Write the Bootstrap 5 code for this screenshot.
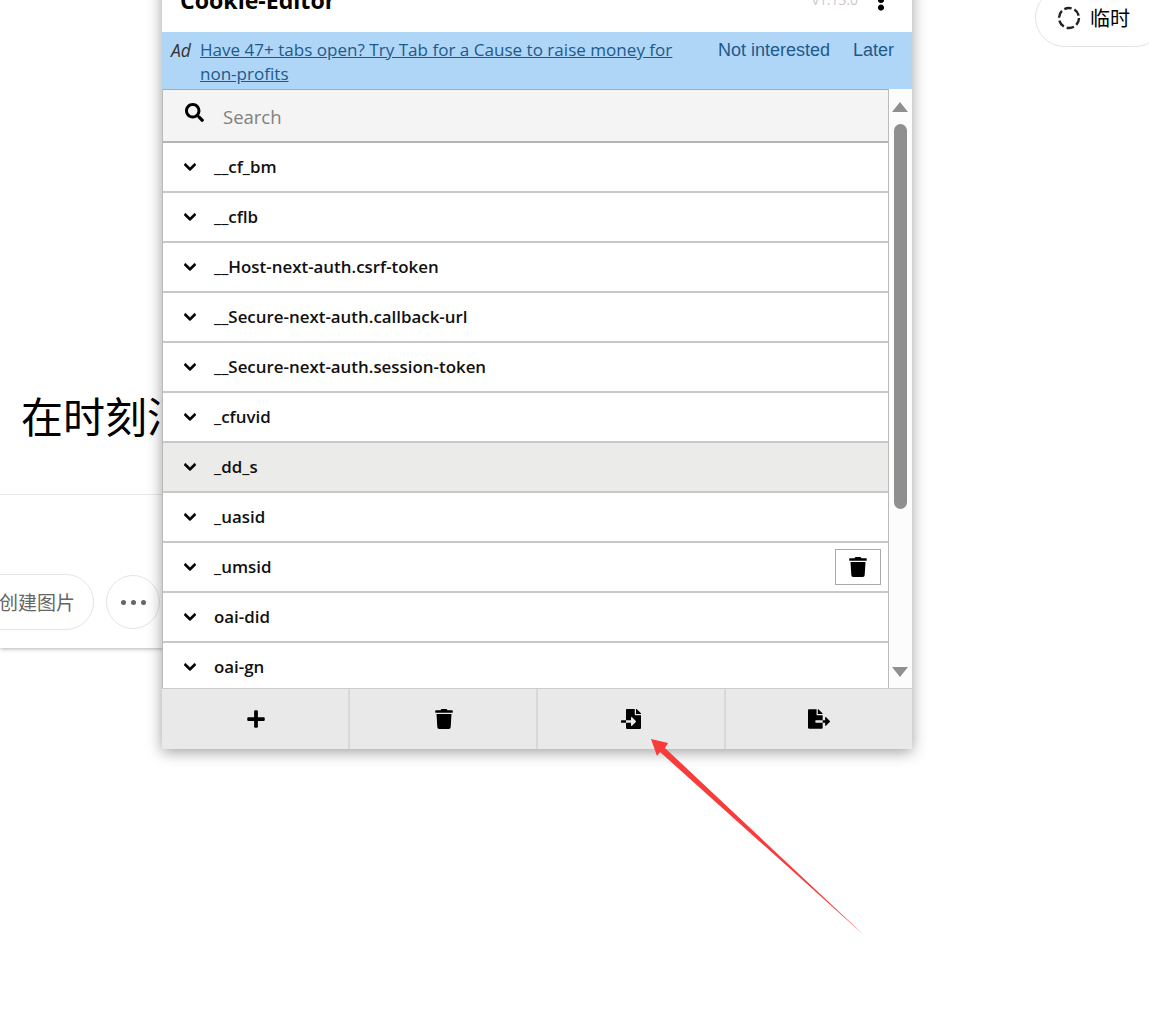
<!DOCTYPE html>
<html lang="zh">
<head>
<meta charset="utf-8">
<title>Cookie-Editor</title>
<link rel="stylesheet" href="https://cdn.jsdelivr.net/npm/bootstrap@5.3.0/dist/css/bootstrap.min.css">
<style>
html,body{height:100%;}
body{background:#fff;overflow:hidden;position:relative;font-family:"Open Sans","Noto Sans CJK SC",sans-serif;color:#000;}
.cjk{font-family:"Noto Sans CJK SC",sans-serif;}
.bgpage{position:absolute;left:0;top:0;width:330px;height:648px;background:#fff;box-shadow:0 1px 4px rgba(0,0,0,.3);display:flex;flex-direction:column;overflow:hidden;}
.bgtitle{margin-top:385px;padding-left:21px;font-size:42px;line-height:60px;white-space:nowrap;height:110px;border-bottom:1px solid #e8e8e8;}
.bgactions{margin-top:79px;margin-left:-80px;gap:12px;}
.pillbtn{height:56px;width:174px;border:1px solid #e5e5e5;border-radius:28px;font-size:19px;color:#666;display:flex;align-items:center;justify-content:flex-end;padding-right:18px;}
.roundbtn{width:54px;height:54px;margin-top:1px;border:1px solid #e5e5e5;border-radius:50%;display:flex;align-items:center;justify-content:center;}
.roundbtn i{display:block;width:5px;height:5px;border-radius:50%;background:#666;margin:0 2.5px;}
.temp{position:absolute;left:1035px;top:-12px;width:130px;height:59px;border:1px solid #e3e3e3;border-radius:30px;background:#fff;padding-left:21px;font-size:20px;gap:9px;}
.popup{position:absolute;left:162px;top:-32px;width:750px;height:781px;background:#fff;box-shadow:0 3px 14px rgba(0,0,0,.38);display:flex;flex-direction:column;overflow:hidden;}
.pophead{height:64px;flex:none;padding:17px 26px 0 18px;}
.poptitle{font-size:23.1px;font-weight:700;line-height:30px;}
.popver{font-size:13.9px;color:#c8c8c8;margin-right:18px;line-height:30px;}
.adbar{height:57px;flex:none;background:#b0d6f7;color:#1d5a8a;display:flex;padding:6px 0 0 9px;font-size:17.07px;line-height:24px;}
.adbar em{color:#333;font-size:17.5px;margin-right:9px;}
.adbar a{color:#1d5a8a;width:486px;display:block;flex:none;}
.adlinks{font-family:"Liberation Sans",sans-serif;font-size:18px;line-height:24px;margin-left:32px;gap:23px;white-space:nowrap;}
.midarea{height:599px;flex:none;display:flex;}
.cookies{width:727px;flex:none;border-left:1px solid #bbb;border-right:1px solid #bbb;overflow:hidden;}
.searchbox{height:54px;background:#f4f4f4;border-top:1px solid #aaa;border-bottom:2px solid #b4b4b4;padding-left:22px;gap:19px;color:#808080;font-size:18.5px;}
.searchbox svg{margin-top:-7px;}
.searchbox span{margin-top:2px;}
.crow{height:50px;border-bottom:2px solid #c8c8c8;padding-left:21px;font-size:16.9px;font-weight:600;color:#111;position:relative;}
.crow svg.chev{width:12px;height:14px;margin-right:18px;stroke:#000;stroke-width:28;overflow:visible;}
.crow.hot{background:#ebebe9;}
.delbtn{position:absolute;right:7px;top:6px;width:46px;height:36px;border:1px solid #aaa;background:#fff;display:flex;align-items:center;justify-content:center;}
.fakebar{width:23px;flex:none;background:#fcfcfc;position:relative;display:flex;flex-direction:column;align-items:center;}
.thumb{width:13px;height:385px;border-radius:7px;background:#8f8f8f;margin-top:35px;}
.tri{position:absolute;left:3px;width:0;height:0;border-left:8px solid transparent;border-right:8px solid transparent;}
.tri.up{top:13px;border-bottom:10px solid #8f8f8f;}
.tri.down{bottom:11px;border-top:10px solid #8f8f8f;}
.popfoot{height:61px;flex:none;background:#e9e9e9;display:flex;border-top:1px solid #ccc;}
.popfoot div{flex:1 1 0;display:flex;align-items:center;justify-content:center;border-right:2px solid #d8d8d8;}
.popfoot div:last-child{border-right:0;}
.popfoot div:nth-child(-n+2) svg{margin-left:2px;}
.arrowmark{position:absolute;left:640px;top:730px;z-index:5;}
</style>
</head>
<body>
<svg width="0" height="0" class="d-block position-absolute">
<defs>
<symbol id="i-search" viewBox="0 0 512 512"><path d="M505 442.7L405.3 343c-4.5-4.5-10.6-7-17-7H372c27.6-35.3 44-79.7 44-128C416 93.1 322.9 0 208 0S0 93.1 0 208s93.1 208 208 208c48.3 0 92.7-16.4 128-44v16.3c0 6.4 2.5 12.5 7 17l99.7 99.7c9.4 9.4 24.6 9.4 33.9 0l28.3-28.3c9.4-9.4 9.4-24.6.1-34zM208 336c-70.7 0-128-57.2-128-128 0-70.7 57.2-128 128-128 70.7 0 128 57.2 128 128 0 70.7-57.2 128-128 128z"/></symbol>
<symbol id="i-chev" viewBox="0 0 448 512"><path d="M207.029 381.476L12.686 187.132c-9.373-9.373-9.373-24.569 0-33.941l22.667-22.667c9.357-9.357 24.522-9.375 33.901-.04L224 284.505l154.745-154.021c9.379-9.335 24.544-9.317 33.901.04l22.667 22.667c9.373 9.373 9.373 24.569 0 33.941L240.971 381.476c-9.373 9.372-24.569 9.372-33.942 0z"/></symbol>
<symbol id="i-trash" viewBox="0 0 448 512"><path d="M432 32H312l-9.4-18.7A24 24 0 0 0 281.1 0H166.8a23.72 23.72 0 0 0-21.4 13.3L136 32H16A16 16 0 0 0 0 48v32a16 16 0 0 0 16 16h416a16 16 0 0 0 16-16V48a16 16 0 0 0-16-16zM53.2 467a48 48 0 0 0 47.9 45h245.8a48 48 0 0 0 47.9-45L416 128H32z"/></symbol>
<symbol id="i-plus" viewBox="0 0 448 512"><path d="M416 208H272V64c0-17.67-14.33-32-32-32h-32c-17.67 0-32 14.33-32 32v144H32c-17.67 0-32 14.33-32 32v32c0 17.67 14.33 32 32 32h144v144c0 17.67 14.33 32 32 32h32c17.67 0 32-14.33 32-32V304h144c17.67 0 32-14.33 32-32v-32c0-17.67-14.33-32-32-32z"/></symbol>
<symbol id="i-import" viewBox="0 0 512 512"><path d="M16 288c-8.8 0-16 7.2-16 16v32c0 8.8 7.2 16 16 16h112v-64zm489-183L407.1 7c-4.5-4.5-10.6-7-17-7H384v128h128v-6.1c0-6.3-2.5-12.4-7-16.9zm-153 31V0H152c-13.3 0-24 10.7-24 24v264h128v-65.2c0-14.3 17.3-21.4 27.4-11.3L379 308c6.6 6.7 6.6 17.4 0 24l-95.7 96.4c-10.1 10.1-27.4 3-27.4-11.3V352H128v136c0 13.3 10.7 24 24 24h336c13.3 0 24-10.7 24-24V160H376c-13.2 0-24-10.8-24-24z"/></symbol>
<symbol id="i-export" viewBox="0 0 576 512"><path d="M384 121.9c0-6.3-2.5-12.4-7-16.9L279.1 7c-4.5-4.5-10.6-7-17-7H256v128h128zM571 308l-95.7-96.4c-10.1-10.1-27.4-3-27.4 11.3V288h-64v64h64v65.2c0 14.3 17.3 21.4 27.4 11.3L571 332c6.6-6.7 6.6-17.4 0-24zm-379 28v-32c0-8.8 7.2-16 16-16h176V160H248c-13.2 0-24-10.8-24-24V0H24C10.7 0 0 10.7 0 24v464c0 13.3 10.7 24 24 24h336c13.3 0 24-10.7 24-24V352H208c-8.8 0-16-7.2-16-16z"/></symbol>
<symbol id="i-kebab" viewBox="0 0 192 512"><path d="M96 184c39.8 0 72 32.2 72 72s-32.2 72-72 72-72-32.2-72-72 32.2-72 72-72zM24 80c0 39.8 32.2 72 72 72s72-32.2 72-72S135.8 8 96 8 24 40.2 24 80zm0 352c0 39.8 32.2 72 72 72s72-32.2 72-72-32.2-72-72-72-72 32.2-72 72z"/></symbol>
<linearGradient id="arrowfade" gradientUnits="userSpaceOnUse" x1="11" y1="9" x2="226" y2="207"><stop offset="0" stop-color="#f83c3c"/><stop offset=".97" stop-color="#f83c3c"/><stop offset="1" stop-color="#f83c3c" stop-opacity=".3"/></linearGradient>
</defs>
</svg>

<div class="bgpage">
  <div class="bgtitle cjk">在时刻消息</div>
  <div class="d-flex bgactions cjk">
    <div class="pillbtn">创建图片</div>
    <div class="roundbtn"><i></i><i></i><i></i></div>
  </div>
</div>

<div class="temp d-flex align-items-center cjk">
  <svg width="24" height="24" viewBox="0 0 24 24" fill="none" stroke="#222" stroke-width="2.4" stroke-dasharray="7.5 3"><circle cx="12" cy="12" r="10"/></svg>
  <span>临时</span>
</div>

<div class="popup">
  <div class="pophead d-flex align-items-start">
    <div class="poptitle flex-grow-1">Cookie-Editor</div>
    <div class="popver">v1.13.0</div>
    <svg width="10" height="22" class="mt-1"><use href="#i-kebab"/></svg>
  </div>
  <div class="adbar">
    <em>Ad</em>
    <a href="#">Have 47+ tabs open? Try Tab for a Cause to raise money for non-profits</a>
    <div class="adlinks d-flex"><span>Not interested</span><span>Later</span></div>
  </div>
  <div class="midarea">
    <div class="cookies">
      <div class="searchbox d-flex align-items-center"><svg width="19" height="19"><use href="#i-search"/></svg><span>Search</span></div>
      <div class="crow d-flex align-items-center"><svg class="chev"><use href="#i-chev"/></svg>__cf_bm</div>
      <div class="crow d-flex align-items-center"><svg class="chev"><use href="#i-chev"/></svg>__cflb</div>
      <div class="crow d-flex align-items-center"><svg class="chev"><use href="#i-chev"/></svg>__Host-next-auth.csrf-token</div>
      <div class="crow d-flex align-items-center"><svg class="chev"><use href="#i-chev"/></svg>__Secure-next-auth.callback-url</div>
      <div class="crow d-flex align-items-center"><svg class="chev"><use href="#i-chev"/></svg>__Secure-next-auth.session-token</div>
      <div class="crow d-flex align-items-center"><svg class="chev"><use href="#i-chev"/></svg>_cfuvid</div>
      <div class="crow hot d-flex align-items-center"><svg class="chev"><use href="#i-chev"/></svg>_dd_s</div>
      <div class="crow d-flex align-items-center"><svg class="chev"><use href="#i-chev"/></svg>_uasid</div>
      <div class="crow d-flex align-items-center"><svg class="chev"><use href="#i-chev"/></svg>_umsid<div class="delbtn"><svg width="18" height="20"><use href="#i-trash"/></svg></div></div>
      <div class="crow d-flex align-items-center"><svg class="chev"><use href="#i-chev"/></svg>oai-did</div>
      <div class="crow d-flex align-items-center"><svg class="chev"><use href="#i-chev"/></svg>oai-gn</div>
    </div>
    <div class="fakebar"><span class="tri up"></span><div class="thumb"></div><span class="tri down"></span></div>
  </div>
  <div class="popfoot">
    <div><svg width="20" height="20"><use href="#i-plus"/></svg></div>
    <div><svg width="18" height="20"><use href="#i-trash"/></svg></div>
    <div><svg width="22" height="20"><use href="#i-import"/></svg></div>
    <div><svg width="22" height="20"><use href="#i-export"/></svg></div>
  </div>
</div>

<svg class="arrowmark" width="240" height="220" viewBox="0 0 240 220"><polygon fill="url(#arrowfade)" points="11,9 28,13 25,18 226,207 20,22 17,26"/></svg>
</body>
</html>
